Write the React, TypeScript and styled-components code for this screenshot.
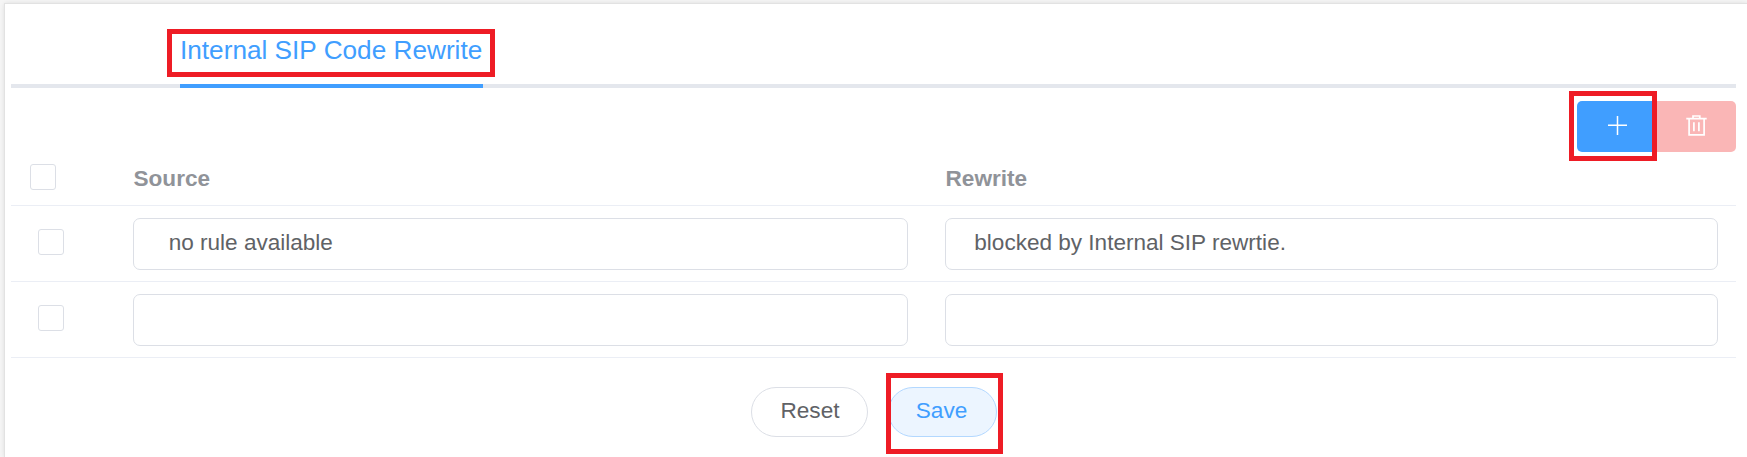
import React from "react";
import styled, { createGlobalStyle, css } from "styled-components";

const GlobalStyle = createGlobalStyle`
  * { box-sizing: border-box; }
  body {
    margin: 0;
    background: #f5f5f5;
    font-family: "Liberation Sans", Arial, sans-serif;
    overflow: hidden;
  }
`;

const Page = styled.div`
  height: 457px;
  padding: 4px 0 0 5px;
`;

const Panel = styled.main`
  height: 453px;
  padding: 0 11px 0 6px;
  background: #fff;
  box-shadow: 0 0 0 1px #e2e2e2, 0 0 5px rgba(0, 0, 0, 0.14);
`;

const Tabs = styled.nav`
  display: flex;
  height: 84px;
  padding-left: 169px;
  background: linear-gradient(#e4e7ed, #e4e7ed) bottom / 100% 4px no-repeat;
`;

const Tab = styled.div`
  position: relative;
  width: 303px;
  padding-top: 31px;
  border-bottom: 4px solid #409eff;
  color: #409eff;
  font-size: 26.2px;
  line-height: 30px;
  white-space: nowrap;
`;

const Highlight = styled.span<{ $top: number; $right: number; $bottom: number; $left: number }>`
  position: absolute;
  z-index: 2;
  top: ${(p) => -p.$top}px;
  right: ${(p) => -p.$right}px;
  bottom: ${(p) => -p.$bottom}px;
  left: ${(p) => -p.$left}px;
  border: 5px solid #ee1c25;
  pointer-events: none;
`;

const Toolbar = styled.div`
  display: flex;
  justify-content: flex-end;
  padding-top: 13px;
`;

const ToolButton = styled.button<{ $danger?: boolean }>`
  position: relative;
  display: flex;
  align-items: center;
  justify-content: center;
  width: ${(p) => (p.$danger ? 79 : 80)}px;
  height: 51px;
  padding: ${(p) => (p.$danger ? "0 1px 1px 0" : "0 0 1px")};
  border: 0;
  border-radius: ${(p) => (p.$danger ? "0 5px 5px 0" : "5px 0 0 5px")};
  background: ${(p) => (p.$danger ? "#fab6b6" : "#409eff")};
`;

const Icon = styled.svg`
  display: block;
  width: 24px;
  height: 24px;
  fill: none;
  stroke: #fff;
`;

const row = css`
  display: grid;
  border-bottom: 1px solid #ebeef5;
`;

const HeaderRow = styled.div`
  ${row}
  height: 54px;
  grid-template-columns: 122px 812px 1fr;
  color: #909399;
  font-size: 22.6px;
  font-weight: bold;
`;

const HeaderLabel = styled.div`
  padding: 14px 0 0 0.5px;
  line-height: 26px;
`;

const Row = styled.div`
  ${row}
  height: 76px;
  grid-template-columns: 122px 775px 37px 773px;
  padding-top: 12px;
`;

const CheckCell = styled.div<{ $header?: boolean }>`
  padding: ${(p) => (p.$header ? "12px 0 0 19px" : "11px 0 0 27px")};
`;

const Checkbox = styled.input.attrs({ type: "checkbox" })`
  appearance: none;
  display: block;
  width: 26px;
  height: 26px;
  margin: 0;
  border: 1px solid #dcdfe6;
  border-radius: 3px;
  background: #fff;
`;

const Field = styled.input<{ $indent: number; $column: number }>`
  grid-column: ${(p) => p.$column};
  width: 100%;
  height: 52px;
  padding: 0 20px 2px ${(p) => p.$indent}px;
  border: 1px solid #dcdfe6;
  border-radius: 7px;
  outline: 0;
  background: #fff;
  color: #606266;
  font: 22.55px "Liberation Sans", Arial, sans-serif;
`;

const Actions = styled.footer`
  display: flex;
  gap: 20px;
  padding: 29px 0 0 740px;
`;

const ActionButton = styled.button<{ $primary?: boolean }>`
  position: relative;
  width: ${(p) => (p.$primary ? 109 : 117)}px;
  height: 50px;
  padding: ${(p) => (p.$primary ? "0 2px 3px 0" : "0 0 3px 1px")};
  border: 1px solid ${(p) => (p.$primary ? "#b3d8ff" : "#dcdfe6")};
  border-radius: 25px;
  background: ${(p) => (p.$primary ? "#ecf5ff" : "#fff")};
  color: ${(p) => (p.$primary ? "#409eff" : "#606266")};
  font: 22.6px "Liberation Sans", Arial, sans-serif;
`;

const rules = [
  { source: "no rule available", rewrite: "blocked by Internal SIP rewrtie." },
  { source: "", rewrite: "" },
];

export default function App() {
  return (
    <>
      <GlobalStyle />
      <Page>
        <Panel>
          <Tabs>
            <Tab>
              Internal SIP Code Rewrite
              <Highlight $top={-25} $right={12} $bottom={-7} $left={13} />
            </Tab>
          </Tabs>
          <Toolbar>
            <ToolButton aria-label="Add rule">
              <Icon viewBox="0 0 24 24" strokeWidth="1.5">
                <path d="M12.5 2v19M3 11.3h19" />
              </Icon>
              <Highlight $top={10} $right={0} $bottom={9} $left={8} />
            </ToolButton>
            <ToolButton $danger aria-label="Delete rules">
              <Icon viewBox="0 0 24 24" strokeWidth="1.7">
                <path d="M2.3 4.7h20.4M9 4.7V2h6.8v2.7M5.1 4.7v16.2h15V4.7M9.9 8.3v8.9M14.9 8.3v8.9" />
              </Icon>
            </ToolButton>
          </Toolbar>
          <HeaderRow>
            <CheckCell $header>
              <Checkbox aria-label="Select all" />
            </CheckCell>
            <HeaderLabel>Source</HeaderLabel>
            <HeaderLabel>Rewrite</HeaderLabel>
          </HeaderRow>
          {rules.map((rule, index) => (
            <Row key={index}>
              <CheckCell>
                <Checkbox aria-label={`Select rule ${index + 1}`} />
              </CheckCell>
              <Field $column={2} $indent={34.7} defaultValue={rule.source} />
              <Field $column={4} $indent={28.3} defaultValue={rule.rewrite} />
            </Row>
          ))}
          <Actions>
            <ActionButton>Reset</ActionButton>
            <ActionButton $primary>
              Save
              <Highlight $top={15} $right={7} $bottom={18} $left={3} />
            </ActionButton>
          </Actions>
        </Panel>
      </Page>
    </>
  );
}
